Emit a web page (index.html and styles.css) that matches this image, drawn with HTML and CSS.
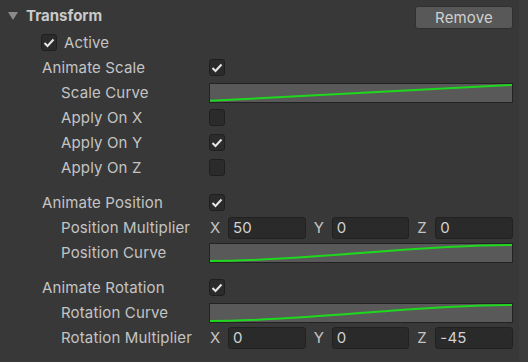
FILE: index.html
```html
<!DOCTYPE html>
<html lang="en">
<head>
  <meta charset="UTF-8">
  <title>Transform Inspector</title>
  <link rel="stylesheet" href="styles.css">
</head>
<body>
  <div class="inspector">
    <div class="panel">

      <div class="header">
        <span class="foldout"></span>
        <span class="title">Transform</span>
        <button class="remove">Remove</button>
      </div>

      <div class="active-row">
        <span class="toggle on"><svg viewBox="0 0 16 17"><polyline points="3.5,9 6.5,12 12.5,5.5"/></svg></span>
        <span class="active-label">Active</span>
      </div>

      <!-- scale -->
      <div class="row">
        <span class="label">Animate Scale</span>
        <span class="field"><span class="toggle on"><svg viewBox="0 0 16 17"><polyline points="3.5,9 6.5,12 12.5,5.5"/></svg></span></span>
      </div>
      <div class="row sub">
        <span class="label">Scale Curve</span>
        <span class="field"><span class="curve"><svg viewBox="0 0 302 18" preserveAspectRatio="none"><path d="M0 16.8 L302 1"/></svg></span></span>
      </div>
      <div class="row sub">
        <span class="label">Apply On X</span>
        <span class="field"><span class="toggle"></span></span>
      </div>
      <div class="row sub">
        <span class="label">Apply On Y</span>
        <span class="field"><span class="toggle on"><svg viewBox="0 0 16 17"><polyline points="3.5,9 6.5,12 12.5,5.5"/></svg></span></span>
      </div>
      <div class="row sub">
        <span class="label">Apply On Z</span>
        <span class="field"><span class="toggle"></span></span>
      </div>

      <!-- position -->
      <div class="group">
        <div class="row">
          <span class="label">Animate Position</span>
          <span class="field"><span class="toggle on"><svg viewBox="0 0 16 17"><polyline points="3.5,9 6.5,12 12.5,5.5"/></svg></span></span>
        </div>
        <div class="row sub">
          <span class="label">Position Multiplier</span>
          <span class="field vector">
            <span class="axis"><span class="axis-label">X</span><span class="num">50</span></span>
            <span class="axis"><span class="axis-label">Y</span><span class="num">0</span></span>
            <span class="axis"><span class="axis-label">Z</span><span class="num">0</span></span>
          </span>
        </div>
        <div class="row sub">
          <span class="label">Position Curve</span>
          <span class="field"><span class="curve"><svg viewBox="0 0 302 18" preserveAspectRatio="none"><path d="M0 17 C100 17 201 1 302 1"/></svg></span></span>
        </div>
      </div>

      <!-- rotation -->
      <div class="group">
        <div class="row">
          <span class="label">Animate Rotation</span>
          <span class="field"><span class="toggle on"><svg viewBox="0 0 16 17"><polyline points="3.5,9 6.5,12 12.5,5.5"/></svg></span></span>
        </div>
        <div class="row sub">
          <span class="label">Rotation Curve</span>
          <span class="field"><span class="curve"><svg viewBox="0 0 302 18" preserveAspectRatio="none"><path d="M0 17 C100 17 201 1 302 1"/></svg></span></span>
        </div>
        <div class="row sub">
          <span class="label">Rotation Multiplier</span>
          <span class="field vector">
            <span class="axis"><span class="axis-label">X</span><span class="num">0</span></span>
            <span class="axis"><span class="axis-label">Y</span><span class="num">0</span></span>
            <span class="axis"><span class="axis-label">Z</span><span class="num">-45</span></span>
          </span>
        </div>
      </div>

    </div>
    <div class="scrollbar"></div>
  </div>
</body>
</html>
```

FILE: styles.css
```css
* {
  box-sizing: border-box;
}

body {
  margin: 0;
  background: #383838;
  font-family: Inter, 'Noto Sans', sans-serif;
  font-size: 15px;
  letter-spacing: 0.15px;
  color: #c4c4c4;
}

.inspector {
  display: flex;
  height: 362px;
}

.panel {
  flex: 1;
  padding-right: 6px;
}

.scrollbar {
  width: 9px;
  background: #3c3c3c;
}

.header {
  display: flex;
  align-items: center;
  height: 30px;
  padding-top: 5px;
}

.foldout {
  width: 0;
  height: 0;
  margin: 0 8px 4px 8px;
  border-left: 5px solid transparent;
  border-right: 5px solid transparent;
  border-top: 8px solid #8b8b8b;
}

.title {
  font-weight: bold;
  letter-spacing: 0;
  margin-bottom: 4px;
  color: #cacaca;
}

.remove {
  margin-left: auto;
  width: 98px;
  height: 23px;
  padding: 0;
  background: #585858;
  border: 1px solid #303030;
  border-radius: 3px;
  font-family: inherit;
  font-size: 15px;
  letter-spacing: 0.15px;
  color: #d0d0d0;
}

.active-row {
  display: flex;
  align-items: center;
  height: 25px;
  padding-left: 41px;
}

.active-label {
  margin-left: 7px;
}

.row {
  display: grid;
  grid-template-columns: 1fr 304px;
  align-items: center;
  height: 25px;
  padding-left: 42px;
}

.row.sub {
  padding-left: 61px;
}

.group {
  margin-top: 10px;
}

.field {
  display: flex;
  align-items: center;
}

.toggle {
  display: block;
  width: 16px;
  height: 17px;
  background: #2b2b2b;
  border: 1px solid #1f1f1f;
  border-radius: 3px;
}

.toggle svg {
  display: block;
  width: 16px;
  height: 17px;
  margin: -1px;
}

.toggle polyline {
  fill: none;
  stroke: #e6e6e6;
  stroke-width: 2;
}

.curve {
  display: block;
  width: 304px;
  height: 20px;
  background: #595959;
  border: 1px solid #222;
}

.curve svg {
  display: block;
  width: 302px;
  height: 18px;
}

.curve path {
  fill: none;
  stroke: #1ed81e;
  stroke-width: 2;
}

.vector {
  gap: 7px;
}

.axis {
  flex: 1;
  display: flex;
  align-items: center;
}

.axis-label {
  width: 19px;
  padding-left: 1px;
}

.num {
  flex: 1;
  height: 22px;
  line-height: 20px;
  padding-left: 4px;
  background: #2a2a2a;
  border: 1px solid #212121;
  border-radius: 3px;
  color: #d2d2d2;
}
```
